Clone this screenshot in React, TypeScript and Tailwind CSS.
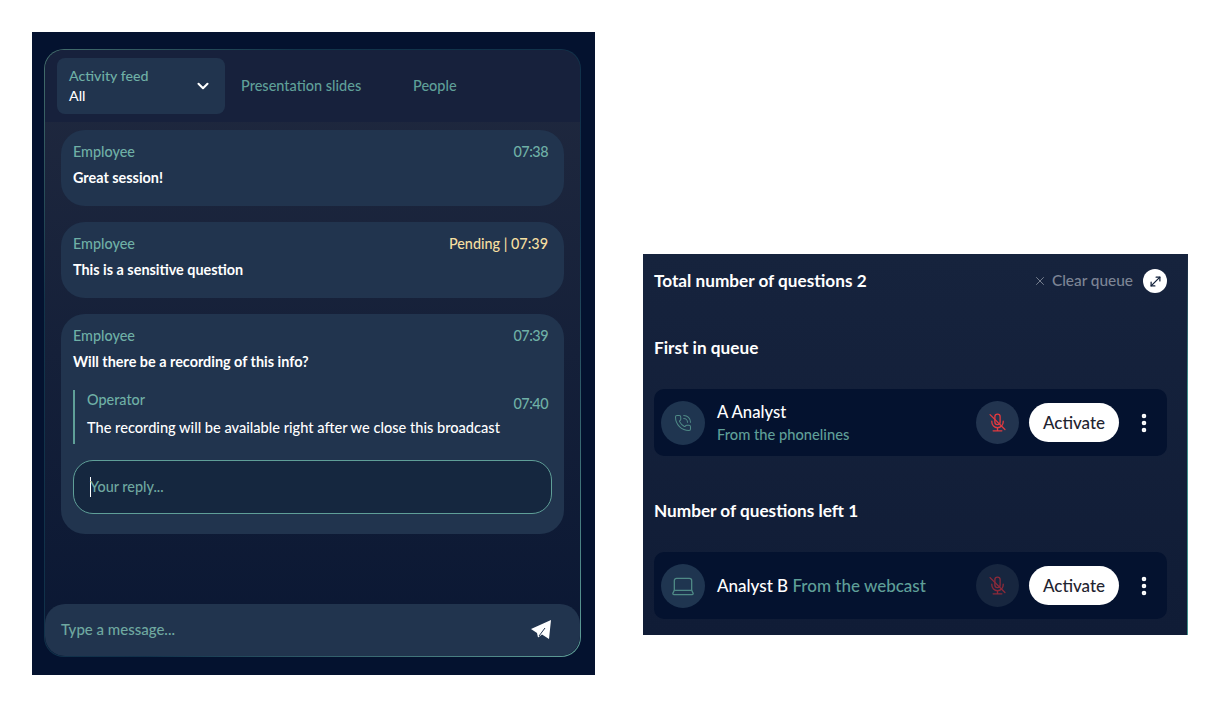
import { ChevronDown, EllipsisVertical, Laptop, MoveDiagonal, PhoneCall, X } from "lucide-react";
import type { ReactNode } from "react";

const font = { fontFamily: '"Lato", "Noto Sans", sans-serif' };

function MutedMic({ className }: { className: string }) {
  return (
    <svg viewBox="0 0 24 24" fill="none" stroke="currentColor" strokeWidth={1.5} strokeLinecap="round" className={className}>
      <rect x="9" y="2.5" width="6" height="12" rx="3" />
      <path d="M5.5 10.5v1a6.5 6.5 0 0 0 13 0v-1" />
      <path d="M12 18v3.5M7 21.5h10" />
      <path d="M3.5 3l17 17" />
    </svg>
  );
}

function PaperPlane() {
  return (
    <svg viewBox="0 0 22 22" className="size-[22px]">
      <path d="M21 1 1 10l6 4 1 4.5 4-3 7 4.5z" fill="#ffffff" />
      <path d="M9 17l6-8" stroke="#22344f" strokeWidth="1" />
    </svg>
  );
}

function Time({ value }: { value: string }) {
  return <span className="tracking-[-0.5px]">{value}</span>;
}

function MessageHead({ name, time }: { name: string; time: ReactNode }) {
  return (
    <div className="flex items-center justify-between text-[14.4px] leading-[20px] font-medium text-[#6fb0a6]">
      <span>{name}</span>
      <span>{time}</span>
    </div>
  );
}

function Message({ time, text }: { time: ReactNode; text: string }) {
  return (
    <div className="h-[76px] rounded-[24px] bg-[#21344e] pt-[12px] pr-[16px] pl-[12px]">
      <MessageHead name="Employee" time={time} />
      <p className="mt-[6px] text-[14.4px] leading-[20px] font-bold text-white">{text}</p>
    </div>
  );
}

function ActivityPanel() {
  return (
    <div className="flex h-[643px] w-[563px] flex-col bg-[#04122f] pt-[17px] pr-[14px] pb-[18px] pl-[12px]">
      <div className="h-full rounded-[20px] bg-[linear-gradient(135deg,#456f6d,#12344a_22%,#10304a_62%,#5f9f98)] p-px">
        <div className="flex h-full flex-col overflow-hidden rounded-[19px] bg-[linear-gradient(to_bottom,#20293f,#0a1733)]">
          <div className="flex h-[72px] items-center bg-[#17213c] pl-[12px]">
            <div className="flex h-[56px] w-[168px] items-center justify-between rounded-[8px] bg-[#21344e] pr-[13px] pl-[12px]">
              <div className="text-[14.2px] leading-[20px] font-medium">
                <div className="text-[#6fb0a6]">Activity feed</div>
                <div className="text-white">All</div>
              </div>
              <ChevronDown className="size-[18px] text-white" strokeWidth={2.8} />
            </div>
            <span className="ml-[16px] w-[172px] text-[14.5px] font-medium text-[#5f9f98]">Presentation slides</span>
            <span className="text-[14.5px] font-medium text-[#5f9f98]">People</span>
          </div>

          <div className="flex flex-1 flex-col gap-[16px] pt-[8px] pr-[16px] pl-[16px]">
            <Message time={<Time value="07:38" />} text="Great session!" />
            <Message time={<span className="text-[#f5dfa0]">Pending | 07:39</span>} text="This is a sensitive question" />
            <div className="h-[220px] rounded-[24px] bg-[#21344e] pt-[12px] pr-[12px] pl-[12px]">
              <div className="pr-[4px]">
                <MessageHead name="Employee" time={<Time value="07:39" />} />
              </div>
              <p className="mt-[6px] text-[14.4px] leading-[20px] font-bold text-white">
                Will there be a recording of this info?
              </p>
              <div className="mt-[18px] h-[54px] border-l-2 border-[#5f9f98] pr-[4px] pl-[12px]">
                <div className="flex items-start justify-between">
                  <span className="text-[14.4px] leading-[20px] font-medium text-[#6fb0a6]">Operator</span>
                  <span className="pt-[4px] text-[14.4px] leading-[20px] font-medium text-[#6fb0a6]">
                    <Time value="07:40" />
                  </span>
                </div>
                <p className="mt-[4px] text-[14.6px] leading-[20px] font-medium text-white">
                  The recording will be available right after we close this broadcast
                </p>
              </div>
              <div className="mt-[16px] flex h-[54px] items-center rounded-[20px] border border-[#5f9f98] bg-[#15273f] pl-[16px] text-[14.4px] font-medium text-[#6fa8a0]">
                <span className="h-[20px] w-px bg-white" />
                <span className="-ml-px">Your reply...</span>
              </div>
            </div>
          </div>

          <div className="flex h-[52px] items-center justify-between rounded-[20px] bg-[#21344e] pr-[28px] pl-[16px]">
            <span className="pb-[2px] text-[15px] font-medium text-[#6fa8a0]">Type a message...</span>
            <PaperPlane />
          </div>
        </div>
      </div>
    </div>
  );
}

function QueueRow({ icon, mic, micBg, children }: { icon: ReactNode; mic: string; micBg: string; children: ReactNode }) {
  return (
    <div className="flex h-[67px] items-center rounded-[10px] bg-[#04122f] pr-[11px] pl-[7px]">
      <div className="flex size-[44px] items-center justify-center rounded-full bg-[#1f3550] text-[#4f8a86]">{icon}</div>
      <div className="ml-[12px] flex-1">{children}</div>
      <div className={`flex size-[43px] items-center justify-center rounded-full ${micBg}`}>
        <MutedMic className={`size-[21px] ${mic}`} />
      </div>
      <div className="ml-[10px] flex h-[39px] w-[90px] items-center justify-center rounded-full bg-white text-[17px] font-medium text-[#1f2430]">
        Activate
      </div>
      <EllipsisVertical className="ml-[13px] size-[24px] text-white" strokeWidth={2.6} />
    </div>
  );
}

function QueuePanel() {
  return (
    <div className="mt-[222px] ml-[48px] flex h-[381px] w-[545px] flex-col border-r bg-[linear-gradient(to_bottom,#16233d,#101c36)] pr-[20px] pl-[11px] [border-image:linear-gradient(to_bottom,#16233d,#3f8f8a_35%,#3f8f8a)_1]">
      <div className="flex h-[54px] items-center justify-between">
        <span className="text-[17.2px] font-bold text-white">Total number of questions 2</span>
        <div className="flex items-center">
          <X className="size-[14px] text-[#7d8595]" strokeWidth={1.6} />
          <span className="ml-[5px] text-[15.4px] font-medium text-[#7d8595]">Clear queue</span>
          <div className="ml-[10px] flex size-[24px] items-center justify-center rounded-full bg-white">
            <MoveDiagonal className="size-[15px] text-[#12203a]" strokeWidth={2} />
          </div>
        </div>
      </div>

      <h2 className="mt-[28px] text-[17.2px] leading-[24px] font-bold text-white">First in queue</h2>
      <div className="mt-[29px]">
        <QueueRow icon={<PhoneCall className="size-[18px]" strokeWidth={1.4} />} mic="text-[#e23a3f]" micBg="bg-[#22344f]">
          <div className="text-[16.7px] leading-[20px] font-medium text-white">A Analyst</div>
          <div className="mt-[2px] text-[14.7px] leading-[20px] font-medium text-[#5f9f98]">From the phonelines</div>
        </QueueRow>
      </div>

      <h2 className="mt-[43px] text-[17.2px] leading-[24px] font-bold text-white">Number of questions left 1</h2>
      <div className="mt-[29px]">
        <QueueRow icon={<Laptop className="size-[26px]" strokeWidth={1.2} />} mic="text-[#8c2a3a]" micBg="bg-[#17263f]">
          <div className="text-[17px] font-medium text-white">
            Analyst B <span className="text-[#5f9f98]">From the webcast</span>
          </div>
        </QueueRow>
      </div>
    </div>
  );
}

export default function App() {
  return (
    <div className="flex h-[707px] w-[1220px] items-start bg-white pt-[32px] pl-[32px]" style={font}>
      <ActivityPanel />
      <QueuePanel />
    </div>
  );
}
